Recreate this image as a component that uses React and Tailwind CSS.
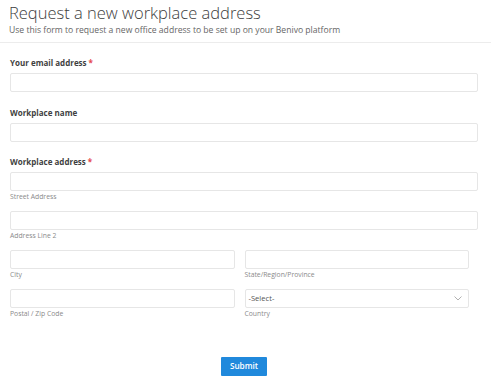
import React from "react";

function Label({ children, required }) {
  return (
    <div className="text-[8px] leading-[14px] font-bold text-[#3f3f3f]">
      {children}
      {required && <span className="text-[#e5484d] ml-[2px]">*</span>}
    </div>
  );
}

function Input({ className = "" }) {
  return (
    <div className={"h-[19px] border border-[#e6e6e6] rounded-[2px] bg-white " + className}></div>
  );
}

function Sub({ children }) {
  return <div className="text-[6.8px] leading-[12px] text-[#8a8a8a]">{children}</div>;
}

export default function App() {
  return (
    <div className="w-[491px] h-[381px] bg-white overflow-hidden font-['Open_Sans',sans-serif] text-[#333]">
      <div className="px-[9px] pt-[2px] pb-[6px] border-b border-[#ececec]">
        <div className="text-[16.5px] leading-[22px] font-light text-[#3d3d3d]">Request a new workplace address</div>
        <div className="text-[8.6px] leading-[12px] text-[#666]">
          Use this form to request a new office address to be set up on your Benivo platform
        </div>
      </div>
      <div className="pl-[10px] pr-[13px] pt-[13px] flex flex-col">
        <Label required>Your email address</Label>
        <Input className="mt-[3px]" />
        <div className="mt-[14px]"><Label>Workplace name</Label></div>
        <Input className="mt-[3px]" />
        <div className="mt-[13px]"><Label required>Workplace address</Label></div>
        <Input className="mt-[3px]" />
        <Sub>Street Address</Sub>
        <Input className="mt-[8px]" />
        <Sub>Address Line 2</Sub>
        <div className="mt-[8px] grid grid-cols-2 gap-x-[10px] pr-[9px]">
          <div>
            <Input />
            <Sub>City</Sub>
          </div>
          <div>
            <Input />
            <Sub>State/Region/Province</Sub>
          </div>
        </div>
        <div className="mt-[8px] grid grid-cols-2 gap-x-[10px] pr-[9px]">
          <div>
            <Input />
            <Sub>Postal / Zip Code</Sub>
          </div>
          <div>
            <div className="h-[19px] border border-[#e6e6e6] rounded-[2px] bg-white flex items-center justify-between pl-[3px] pr-[6px]">
              <span className="text-[7.6px] text-[#555]">-Select-</span>
              <svg width="8" height="5" viewBox="0 0 8 5" fill="none">
                <path d="M0.5 0.5l3.5 3.5L7.5 0.5" stroke="#a8a8a8" strokeWidth="0.9" />
              </svg>
            </div>
            <Sub>Country</Sub>
          </div>
        </div>
        <div className="flex justify-center mt-[37px]">
          <button className="h-[19px] w-[46px] bg-[#2089dc] text-white text-[8.2px] font-semibold leading-none rounded-[1px]">
            Submit
          </button>
        </div>
      </div>
    </div>
  );
}
